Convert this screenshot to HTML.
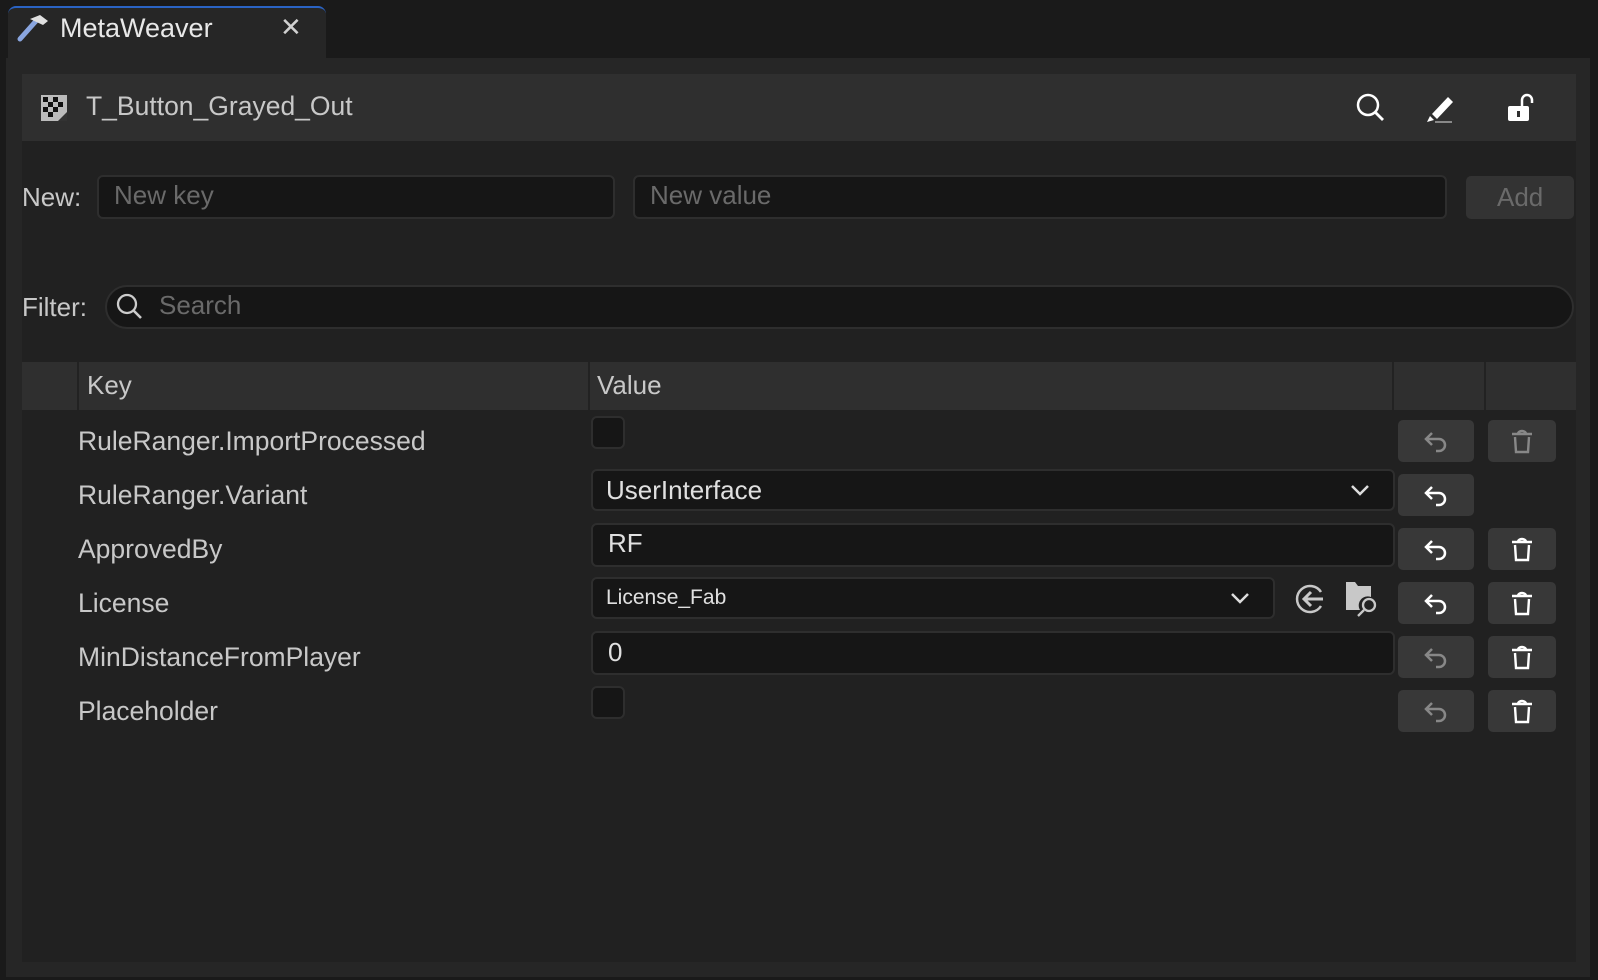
<!DOCTYPE html>
<html><head><style>
*{box-sizing:border-box;margin:0;padding:0}
body{width:1598px;height:980px;background:#1a1a1a;font-family:"Liberation Sans",sans-serif;color:#c0c0c0;position:relative;overflow:hidden}
.a{position:absolute}
.tab{left:8px;top:6px;width:318px;height:52px;background:#262626;border-radius:8px 8px 0 0;border-top:2px solid #2a63c4}
.panel{left:6px;top:58px;width:1584px;height:919px;background:#262626}
.inner{left:22px;top:74px;width:1554px;height:888px;background:#212121}
.hdr{left:22px;top:74px;width:1554px;height:67px;background:#2f2f2f}
.lbl{font-size:26px;color:#c8c8c8}
.inp{background:#161616;border:2px solid #2e2e2e;border-radius:6px}
.ph{font-size:26px;color:#6a6a6a}
.btn{background:#383838;border-radius:5px}
.th{top:362px;height:48px;background:#2f2f2f}
.key{left:78px;font-size:26.5px;color:#c8c8c8}
</style></head><body>
<div class="a tab"></div>
<svg class="a" style="left:16px;top:13px" width="34" height="30" viewBox="0 0 34 30"><path d="M4 26 L20 8" stroke="#8aa6e0" stroke-width="5" stroke-linecap="round"/><path d="M14 6 L24 2 L32 8 L27 12 Z" fill="#e0e0e0"/></svg>
<div class="a" style="left:60px;top:13px;font-size:27px;color:#e8e8e8">MetaWeaver</div>
<div class="a" style="left:280px;top:12px;font-size:26px;color:#d0d0d0">✕</div>
<div class="a panel"></div>
<div class="a inner"></div>
<div class="a hdr"></div>
<svg class="a" style="left:40px;top:94px" width="28" height="28" viewBox="0 0 28 28"><rect x="1" y="1" width="26" height="26" fill="#bbb"/><g fill="#111"><rect x="3" y="3" width="5" height="5"/><rect x="13" y="3" width="5" height="5"/><rect x="8" y="8" width="5" height="5"/><rect x="18" y="8" width="5" height="5"/><rect x="3" y="13" width="5" height="5"/><rect x="13" y="13" width="5" height="5"/><rect x="8" y="18" width="5" height="5"/></g><path d="M18 27 L27 18 L27 27Z" fill="#333"/></svg>
<div class="a" style="left:86px;top:91px;font-size:26.5px;color:#c8c8c8">T_Button_Grayed_Out</div>
<svg class="a" style="left:1355px;top:92px" width="32" height="32" viewBox="0 0 32 32"><circle cx="13" cy="13" r="10" fill="none" stroke="#fff" stroke-width="2.5"/><path d="M20 20 L28 28" stroke="#fff" stroke-width="2.8"/></svg>
<svg class="a" style="left:1424px;top:92px" width="34" height="32" viewBox="0 0 34 32"><path d="M8 22 L24 5 L29 10 L13 27 Z" fill="#fff"/><path d="M6 24 L3 30 L10 28Z" fill="#fff"/><rect x="11" y="29" width="17" height="2" fill="#888"/></svg>
<svg class="a" style="left:1505px;top:92px" width="30" height="32" viewBox="0 0 30 32"><rect x="3" y="14" width="21" height="15" rx="2" fill="#fff"/><rect x="12" y="19" width="3" height="6" fill="#2f2f2f"/><path d="M17 15 V8 a5 5 0 0 1 10 0 V11" fill="none" stroke="#fff" stroke-width="2.5"/></svg>

<div class="a lbl" style="left:22px;top:182px">New:</div>
<div class="a inp" style="left:97px;top:175px;width:518px;height:44px"></div>
<div class="a ph" style="left:114px;top:180px">New key</div>
<div class="a inp" style="left:633px;top:175px;width:814px;height:44px"></div>
<div class="a ph" style="left:650px;top:180px">New value</div>
<div class="a btn" style="left:1466px;top:176px;width:108px;height:43px;background:#333"></div>
<div class="a ph" style="left:1497px;top:182px">Add</div>

<div class="a lbl" style="left:22px;top:292px">Filter:</div>
<div class="a inp" style="left:105px;top:285px;width:1469px;height:44px;border-radius:22px"></div>
<svg class="a" style="left:115px;top:292px" width="30" height="30" viewBox="0 0 30 30"><circle cx="12" cy="12" r="9" fill="none" stroke="#ccc" stroke-width="2.3"/><path d="M18.5 18.5 L26 26" stroke="#ccc" stroke-width="2.6"/></svg>
<div class="a ph" style="left:159px;top:290px">Search</div>

<div class="a th" style="left:22px;width:1554px"></div>
<div class="a" style="left:77px;top:362px;width:2px;height:48px;background:#222"></div>
<div class="a" style="left:588px;top:362px;width:2px;height:48px;background:#222"></div>
<div class="a" style="left:1392px;top:362px;width:2px;height:48px;background:#222"></div>
<div class="a" style="left:1484px;top:362px;width:2px;height:48px;background:#222"></div>
<div class="a lbl" style="left:87px;top:370px">Key</div>
<div class="a lbl" style="left:597px;top:370px">Value</div>

<div class="a key" style="top:426px">RuleRanger.ImportProcessed</div>
<div class="a key" style="top:480px">RuleRanger.Variant</div>
<div class="a key" style="top:534px">ApprovedBy</div>
<div class="a key" style="top:588px">License</div>
<div class="a key" style="top:642px">MinDistanceFromPlayer</div>
<div class="a key" style="top:696px">Placeholder</div>

<div class="a inp" style="left:591px;top:416px;width:34px;height:33px"></div>
<div class="a inp" style="left:591px;top:469px;width:804px;height:42px"></div>
<div class="a" style="left:606px;top:475px;font-size:26px;color:#e0e0e0">UserInterface</div>
<svg class="a" style="left:1349px;top:482px" width="22" height="16"><path d="M3 4 L11 12 L19 4" fill="none" stroke="#ddd" stroke-width="2.5"/></svg>
<div class="a inp" style="left:591px;top:523px;width:804px;height:44px"></div>
<div class="a" style="left:608px;top:528px;font-size:26px;color:#e0e0e0">RF</div>
<div class="a inp" style="left:591px;top:577px;width:684px;height:42px"></div>
<div class="a" style="left:606px;top:586px;font-size:21px;color:#e0e0e0">License_Fab</div>
<svg class="a" style="left:1229px;top:590px" width="22" height="16"><path d="M3 4 L11 12 L19 4" fill="none" stroke="#ddd" stroke-width="2.5"/></svg>
<svg class="a" style="left:1293px;top:582px" width="34" height="34" viewBox="0 0 34 34"><path d="M28 10 A13 13 0 1 0 28 24" fill="none" stroke="#c8c8c8" stroke-width="2.5"/><path d="M30 17 H11 M18 10 L11 17 L18 24" fill="none" stroke="#c8c8c8" stroke-width="3"/></svg>
<svg class="a" style="left:1345px;top:581px" width="34" height="36" viewBox="0 0 34 36"><path d="M1 1 H10 L13 5 H26 V16 A9 9 0 0 0 15 29 H1Z" fill="#c8c8c8"/><circle cx="24" cy="24" r="6" fill="none" stroke="#c8c8c8" stroke-width="2.3"/><path d="M19 29 L13 35" stroke="#c8c8c8" stroke-width="2.3"/></svg>
<div class="a inp" style="left:591px;top:631px;width:804px;height:44px"></div>
<div class="a" style="left:608px;top:637px;font-size:26px;color:#e0e0e0">0</div>
<div class="a inp" style="left:591px;top:686px;width:34px;height:33px"></div>

<svg width="0" height="0" style="position:absolute"><defs>
<symbol id="u" viewBox="0 0 30 30"><path d="M11 7 L5 13 L11 19 M5 13 H18 a6 6 0 0 1 0 12 H15" fill="none" stroke="currentColor" stroke-width="2.5"/></symbol>
<symbol id="t" viewBox="0 0 30 30"><path d="M5 8 H25 M11 8 a4 3 0 0 1 8 0 M8 11 L9 26 H21 L22 11" fill="none" stroke="currentColor" stroke-width="2.4"/></symbol>
</defs></svg>

<div class="a btn" style="left:1398px;top:420px;width:76px;height:42px"></div>
<svg class="a" style="left:1421px;top:426px;color:#888" width="30" height="30"><use href="#u"/></svg>
<div class="a btn" style="left:1488px;top:420px;width:68px;height:42px"></div>
<svg class="a" style="left:1507px;top:426px;color:#888" width="30" height="30"><use href="#t"/></svg>

<div class="a btn" style="left:1398px;top:474px;width:76px;height:42px"></div>
<svg class="a" style="left:1421px;top:480px;color:#fff" width="30" height="30"><use href="#u"/></svg>

<div class="a btn" style="left:1398px;top:528px;width:76px;height:42px"></div>
<svg class="a" style="left:1421px;top:534px;color:#fff" width="30" height="30"><use href="#u"/></svg>
<div class="a btn" style="left:1488px;top:528px;width:68px;height:42px"></div>
<svg class="a" style="left:1507px;top:534px;color:#fff" width="30" height="30"><use href="#t"/></svg>

<div class="a btn" style="left:1398px;top:582px;width:76px;height:42px"></div>
<svg class="a" style="left:1421px;top:588px;color:#fff" width="30" height="30"><use href="#u"/></svg>
<div class="a btn" style="left:1488px;top:582px;width:68px;height:42px"></div>
<svg class="a" style="left:1507px;top:588px;color:#fff" width="30" height="30"><use href="#t"/></svg>

<div class="a btn" style="left:1398px;top:636px;width:76px;height:42px"></div>
<svg class="a" style="left:1421px;top:642px;color:#888" width="30" height="30"><use href="#u"/></svg>
<div class="a btn" style="left:1488px;top:636px;width:68px;height:42px"></div>
<svg class="a" style="left:1507px;top:642px;color:#fff" width="30" height="30"><use href="#t"/></svg>

<div class="a btn" style="left:1398px;top:690px;width:76px;height:42px"></div>
<svg class="a" style="left:1421px;top:696px;color:#888" width="30" height="30"><use href="#u"/></svg>
<div class="a btn" style="left:1488px;top:690px;width:68px;height:42px"></div>
<svg class="a" style="left:1507px;top:696px;color:#fff" width="30" height="30"><use href="#t"/></svg>
</body></html>
